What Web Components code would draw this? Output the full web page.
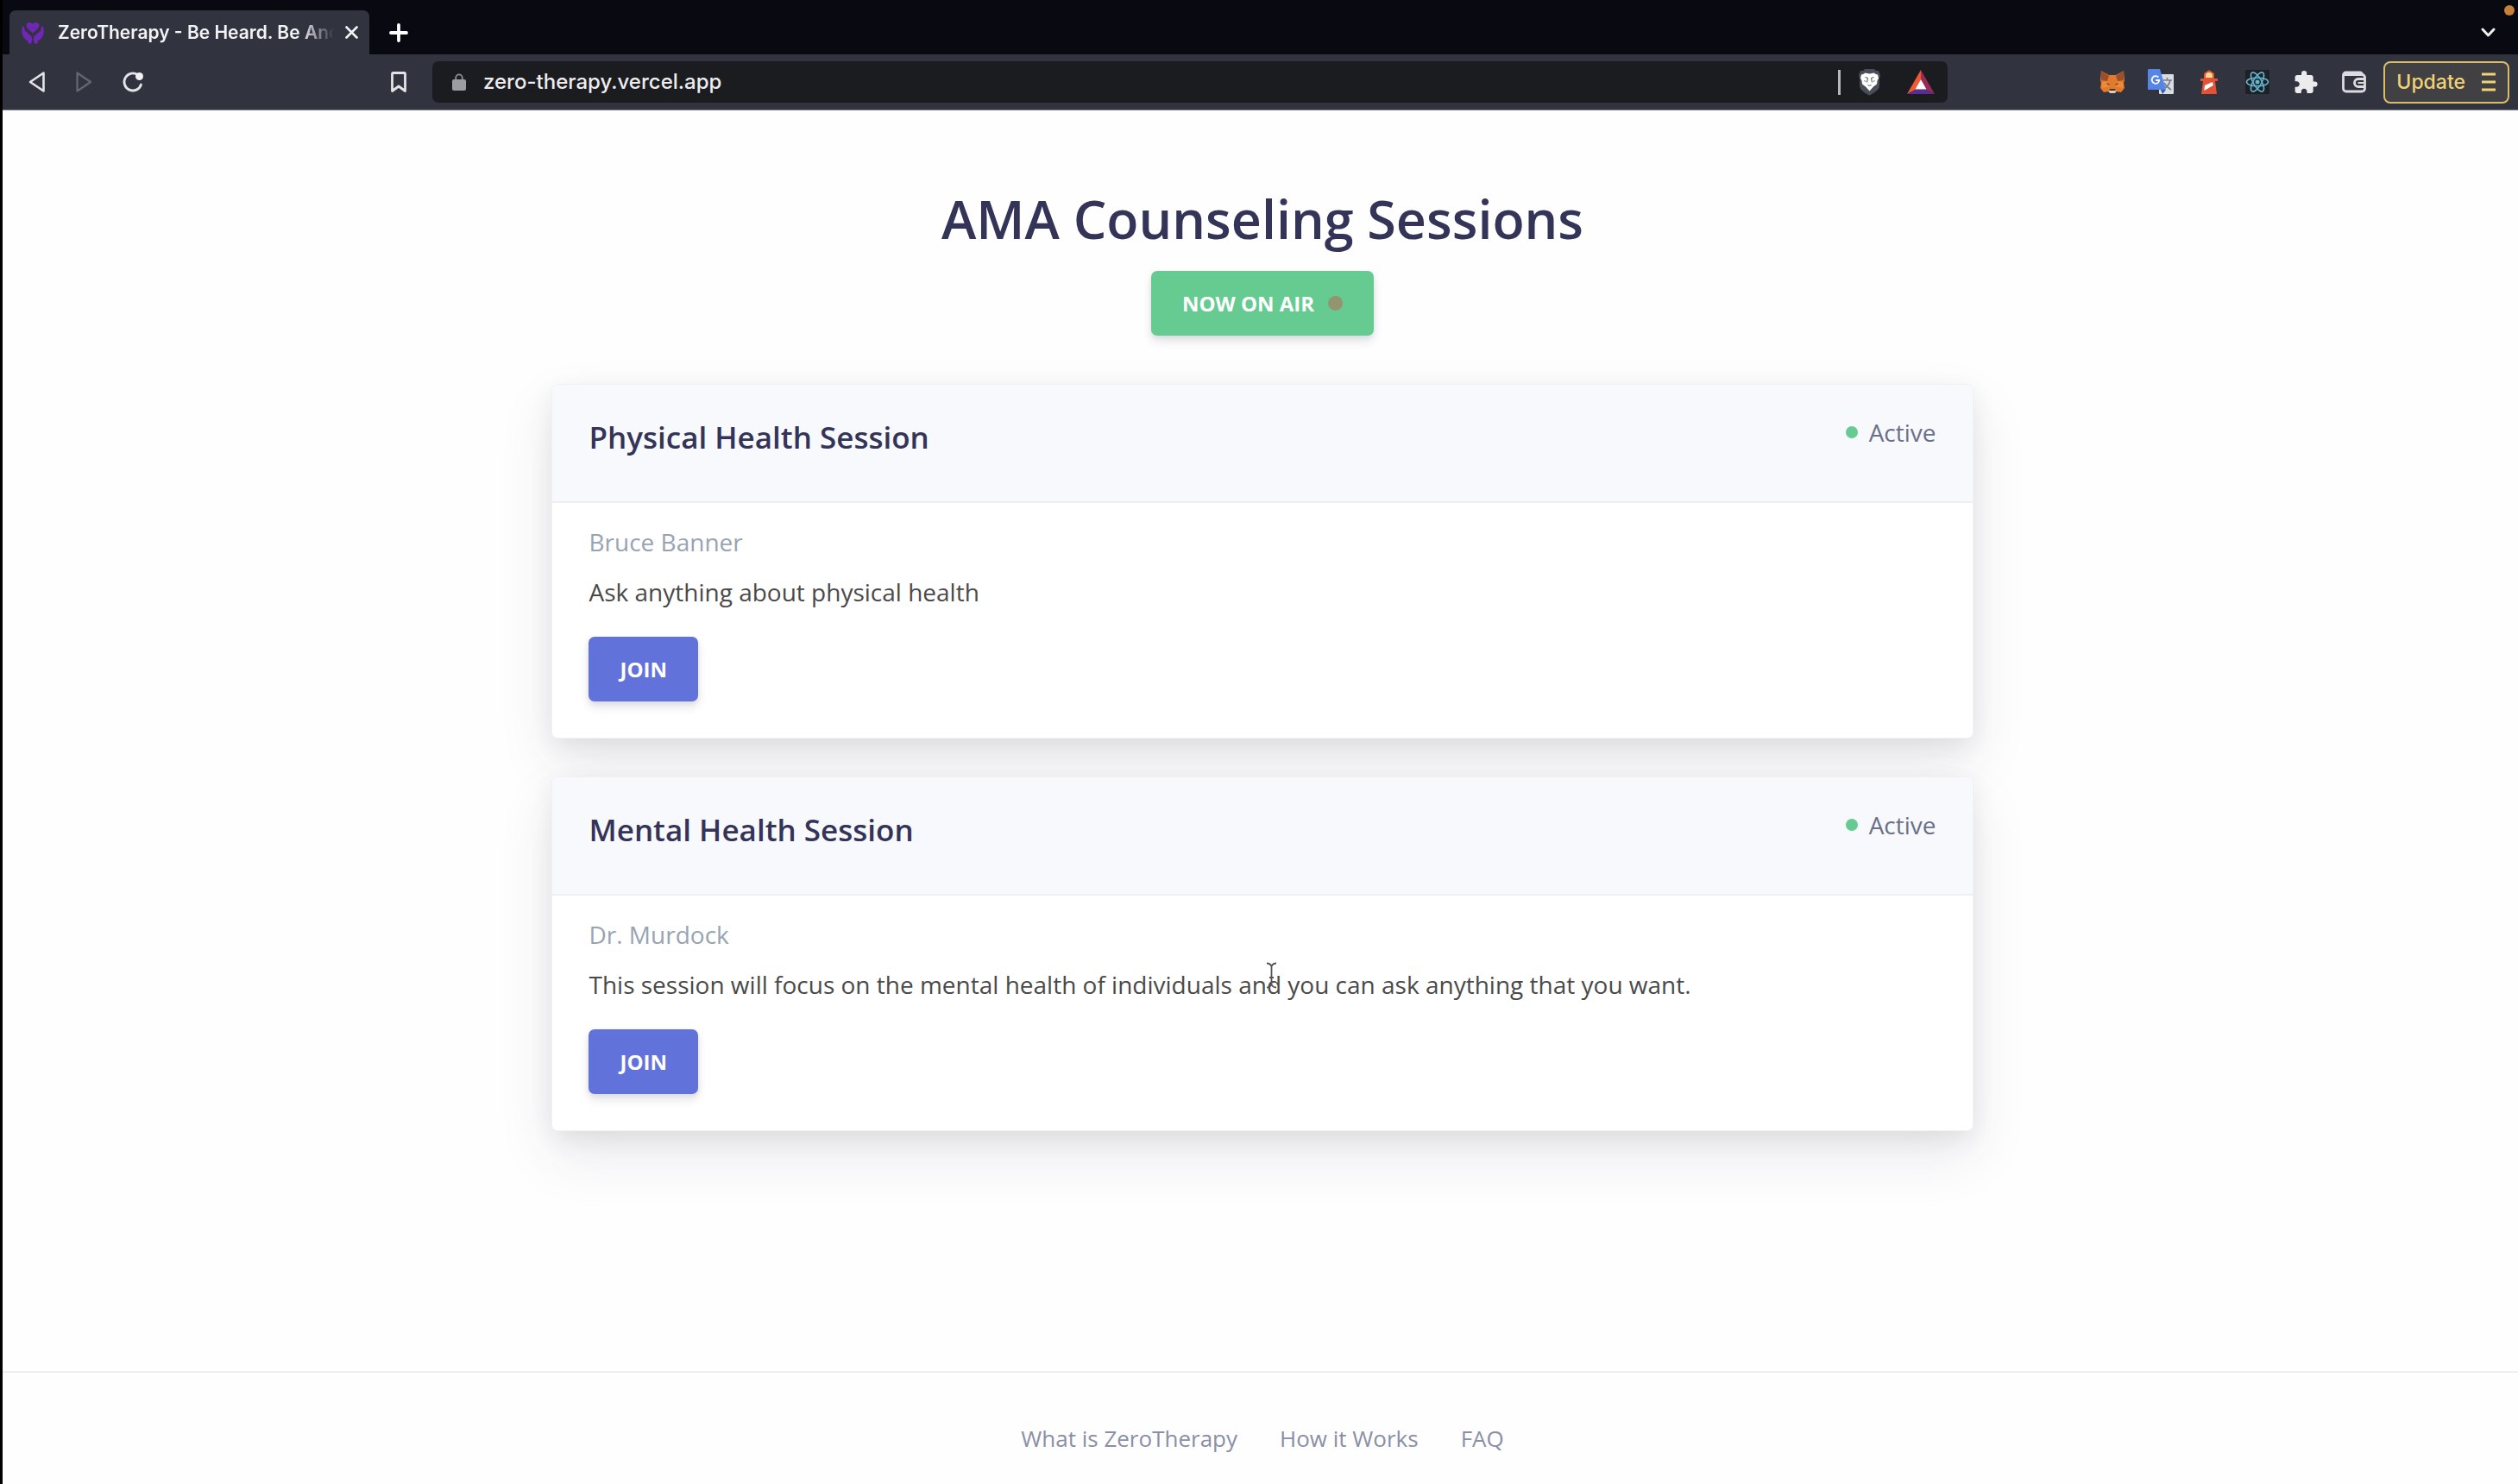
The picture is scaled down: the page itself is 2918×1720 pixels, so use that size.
<!DOCTYPE html>
<html lang="en">
<head>
<meta charset="utf-8">
<title>ZeroTherapy - Be Heard. Be Anonymous</title>
<style>
    body {
        margin: 0;
        border-left: 3px solid #000;
        min-height: 100vh;
        box-sizing: border-box;
        display: flex;
        flex-direction: column;
        background: #fefefe;
        font-family: "Open Sans", sans-serif;
    }
    therapy-page {
        flex: 1;
    }
</style>
</head>
<body>

<browser-bar>
    <browser-tab slot="tab">ZeroTherapy - Be Heard. Be Anonymous</browser-tab>
    <address-bar slot="address" url="zero-therapy.vercel.app"></address-bar>
</browser-bar>

<therapy-page>
    <span slot="title">AMA Counseling Sessions</span>
    <on-air-button slot="action">NOW ON AIR</on-air-button>
    <session-card>
        <span slot="title">Physical Health Session</span>
        <span slot="status">Active</span>
        <span slot="host">Bruce Banner</span>
        <span slot="about">Ask anything about physical health</span>
    </session-card>
    <session-card>
        <span slot="title">Mental Health Session</span>
        <span slot="status">Active</span>
        <span slot="host">Dr. Murdock</span>
        <span slot="about">This session will focus on the mental health of individuals and you can ask anything that you want.</span>
    </session-card>
    <page-footer slot="footer">
        <a href="#what">What is ZeroTherapy</a>
        <a href="#how">How it Works</a>
        <a href="#faq">FAQ</a>
    </page-footer>
</therapy-page>

<script>
class BrowserTab extends HTMLElement {

    constructor() {
        super();
        this.attachShadow({ mode: "open" }).innerHTML = `
        <style>
        :host {
            display: flex;
            align-items: center;
            box-sizing: border-box;
            width: 417px;
            height: 51px;
            padding: 0 13px 0 14px;
            border-radius: 7px 7px 0 0;
            background: #31333f;
            color: #f3f3f5;
            font: 600 21px/28px Inter, sans-serif;
        }
        .favicon {
            flex: none;
            margin-right: 16px;
        }
        .label {
            flex: 1;
            overflow: hidden;
            white-space: nowrap;
            -webkit-mask-image: linear-gradient(to right, #000 88%, transparent);
            mask-image: linear-gradient(to right, #000 88%, transparent);
        }
        button {
            flex: none;
            display: flex;
            margin-left: 13px;
            padding: 0;
            border: 0;
            background: none;
            color: inherit;
        }
        </style>
        <svg class="favicon" width="26" height="26" viewBox="0 0 26 26" fill="#7226b8">
            <path d="M13 13.500L7 8C4.500 5 5.500 1 9 1c1.800 0 3.200.8 4 2 .8-1.200 2.200-2 4-2 3.500 0 4.500 4 2 7z"/>
            <path d="M2 5C3.300 5.800 3 8 4 10.500l7.300 6.500c.7 1.500.9 3 .9 4.500L11 25.500H8l-1-3C3.500 20.500.8 17 .3 12.500 0 9.500.2 6.500 2 5z"/>
            <path d="M24 5c-1.300.8-1 3-2 5.500l-7.300 6.500c-.7 1.500-.9 3-.9 4.500l1.200 4h3l1-3c3.500-2 6.200-5.500 6.700-10 .3-3 .1-6-1.700-7.500z"/>
            <path d="M9 6.500c1.500 1.500 2.500 1 4 .2 1.500.8 2.500 1.300 4-.2" fill="none" stroke="#5a2d90" stroke-width="1"/>
        </svg>
        <span class="label"><slot></slot></span>
        <button aria-label="Close tab">
            <svg width="15" height="15" viewBox="0 0 15 15" fill="none" stroke="currentColor" stroke-width="2.600" stroke-linecap="round"><path d="M1.500 1.500l12 12M13.500 1.500l-12 12"/></svg>
        </button>`;
    }

}

class AddressBar extends HTMLElement {

    connectedCallback() {
        this.attachShadow({ mode: "open" }).innerHTML = `
        <style>
        :host {
            display: flex;
            align-items: center;
            box-sizing: border-box;
            height: 48px;
            padding: 0 15px 0 23px;
            border-radius: 7px;
            background: #1b1c1f;
        }
        svg {
            flex: none;
        }
        input {
            flex: 1;
            min-width: 0;
            margin: 0 0 0 20px;
            padding: 0;
            border: 0;
            outline: 0;
            background: none;
            color: #ededf0;
            font: 500 24px/30px Inter, sans-serif;
        }
        .divider {
            width: 3px;
            height: 29px;
            margin-right: 20px;
            background: #b6b7ba;
        }
        .shield {
            margin-right: 30px;
        }
        </style>
        <svg width="16" height="20" viewBox="0 0 16 20">
            <path d="M4.200 9V5.200a3.800 3.800 0 0 1 7.600 0V9" fill="none" stroke="#8c9094" stroke-width="1.800"/>
            <rect x="0" y="7" width="16" height="13" rx="2" fill="#9a9ea2"/>
        </svg>
        <input type="text" aria-label="Address" value="${this.getAttribute("url")}">
        <span class="divider"></span>
        <svg class="shield" width="27" height="32" viewBox="0 0 27 32">
            <path d="M8 1h11l2 2h3l2 5-1 4 0 8c0 5-5 8-11.500 11.500C7 28 2 25 2 20V12L1 8l2-5h3z" fill="#4b4c59"/>
            <path d="M8.500 5.500 13.500 6.500l5-1 2.500 1.500 2 .5 1 4-1.500 3-.5 4-4 3-4.500 5-4.500-5-4-3-.5-4-1.500-3 1-4 2-.5z" fill="#fff"/>
            <path d="M8.500 10.500l3 1-1 5M18.500 10.500l-3 1 1 5M7.500 14.500l1.500 1M19.500 14.500l-1.500 1M11.500 19.500l2 1 2-1" fill="none" stroke="#4b4c59" stroke-width="1"/>
        </svg>
        <svg width="32" height="28" viewBox="0 0 32 28">
            <path d="M16 0L0 28l10.500-5.500L16 11z" fill="#ef5a35"/>
            <path d="M16 0l16 28-10.500-5.500L16 11z" fill="#9a2a58"/>
            <path d="M0 28h32l-10.500-5.500h-11z" fill="#5a2d91"/>
            <path d="M16 11l6.500 11.500h-13z" fill="#fff"/>
        </svg>`;
    }

}

class BrowserBar extends HTMLElement {

    constructor() {
        super();
        this.attachShadow({ mode: "open" }).innerHTML = `
        <style>
        :host {
            display: block;
            color: #e4e4e8;
        }
        button {
            display: flex;
            align-items: center;
            padding: 0;
            border: 0;
            background: none;
            color: inherit;
            font: inherit;
        }
        .strip {
            position: relative;
            display: flex;
            align-items: flex-end;
            height: 63px;
            padding: 0 26px 0 8px;
            background: #090912;
        }
        .strip button {
            height: 51px;
        }
        .new-tab {
            margin-left: 23px;
        }
        .tab-search {
            margin-left: auto;
        }
        /* camera-in-use light */
        .light {
            position: absolute;
            top: 6px;
            right: 4px;
            width: 12px;
            height: 12px;
            border-radius: 50%;
            background: #c5803a;
        }
        .toolbar {
            display: flex;
            align-items: center;
            height: 65px;
            padding: 0 10px 0 30px;
            border-bottom: 1px solid #85868d;
            background: #31333f;
            box-sizing: border-box;
        }
        .nav {
            display: flex;
            gap: 34px;
        }
        .bookmark {
            margin: 0 29px 0 285px;
        }
        .address {
            flex: 1;
            min-width: 0;
        }
        .extensions {
            display: flex;
            align-items: center;
            gap: 26px;
            margin: 0 19px 0 176px;
        }
        .update {
            gap: 19px;
            height: 49px;
            padding: 0 14px 0 13px;
            border: 2px solid #d9bd68;
            border-radius: 8px;
            background: #414043;
            color: #f0d377;
            font: 500 23px/30px Inter, sans-serif;
        }
        </style>
        <div class="strip">
            <slot name="tab"></slot>
            <button class="new-tab" aria-label="New tab">
                <svg width="22" height="22" viewBox="0 0 22 22" fill="none" stroke="#fff" stroke-width="3.800" stroke-linecap="round"><path d="M11 2v18M2 11h18"/></svg>
            </button>
            <button class="tab-search" aria-label="Search tabs">
                <svg width="17" height="12" viewBox="0 0 17 12" fill="none" stroke="#eee" stroke-width="3" stroke-linecap="round" stroke-linejoin="round"><path d="M2 2l6.500 7L15 2"/></svg>
            </button>
            <span class="light"></span>
        </div>
        <div class="toolbar">
            <div class="nav">
                <button aria-label="Back">
                    <svg width="20" height="26" viewBox="0 0 20 26" fill="none" stroke="currentColor" stroke-width="2.600" stroke-linejoin="round"><path d="M17.500 2.500v21L2 13z"/></svg>
                </button>
                <button aria-label="Forward">
                    <svg width="20" height="26" viewBox="0 0 20 26" fill="none" stroke="#656671" stroke-width="2.300" stroke-linejoin="round"><path d="M2.500 2.500v21L18 13z"/></svg>
                </button>
                <button aria-label="Reload">
                    <svg width="26" height="26" viewBox="0 0 26 26"><path d="M19 5A10 10 0 1 0 22.500 16" fill="none" stroke="currentColor" stroke-width="2.800" stroke-linecap="round"/><circle cx="20.500" cy="6.500" r="4.500" fill="#f1f1f4"/></svg>
                </button>
            </div>
            <button class="bookmark" aria-label="Bookmark">
                <svg width="20" height="26" viewBox="0 0 20 26" fill="none" stroke="currentColor" stroke-width="2.800" stroke-linejoin="round"><path d="M3.500 2.500h13a1 1 0 0 1 1 1v20L10 18l-7.500 5.500v-20a1 1 0 0 1 1-1z"/></svg>
            </button>
            <div class="address"><slot name="address"></slot></div>
            <div class="extensions">
                <button aria-label="MetaMask">
                    <svg width="30" height="28" viewBox="0 0 30 28">
                        <path d="M2 1l9 5h8l9-5 1 11-1 3 1 6-4 5-6-1-2 2h-4l-2-2-6 1-4-5 1-6-1-3z" fill="#e17a2d"/>
                        <path d="M2 1l9 6-2 6-7-1zM28 1l-9 6 2 6 7-1z" fill="#9b4f2a"/>
                        <path d="M2 15l7-2 3 6-9 2zM28 15l-7-2-3 6 9 2z" fill="#ef8a37"/>
                        <path d="M8 15l3 1 1 2-3-1zM22 15l-3 1-1 2 3-1z" fill="#6b4a36"/>
                        <path d="M10 24l2-1h6l2 1-2 3h-6z" fill="#dccabb"/>
                        <path d="M12 22h6l1 2h-8z" fill="#46372f"/>
                    </svg>
                </button>
                <button aria-label="Translate">
                    <svg width="30" height="30" viewBox="0 0 30 30">
                        <rect x="13" y="6" width="17" height="23" rx="1" fill="#d9dce0"/>
                        <path d="M17 13h11M22.500 10v3M26 13c-1 5-4 8-8 10M19 16c2 4 5 6 8 8" fill="none" stroke="#75808c" stroke-width="1.700"/>
                        <path d="M15 24h6l-4 5z" fill="#3259b4"/>
                        <path d="M1 0h13l7 24H1a1 1 0 0 1-1-1V1a1 1 0 0 1 1-1z" fill="#5685e8"/>
                        <path d="M12.300 9.700a4.300 4.300 0 1 0 1 3.300H9.300" fill="none" stroke="#fff" stroke-width="1.800"/>
                    </svg>
                </button>
                <button aria-label="Lighthouse">
                    <svg width="30" height="28" viewBox="0 0 30 28">
                        <path d="M15 0l6 4v6h4v3h-3l2 15H6l2-15H5v-3h4V4z" fill="#e05334"/>
                        <path d="M11 9V7a4 4 0 0 1 8 0v2z" fill="#f9dc91"/>
                        <path d="M10 18l9-4 .8 4-10.500 6z" fill="#fff"/>
                    </svg>
                </button>
                <button aria-label="React Developer Tools">
                    <svg width="30" height="28" viewBox="0 0 30 28">
                        <rect x="1" width="28" height="28" rx="1" fill="#1d2125"/>
                        <g fill="none" stroke="#65b5d0" stroke-width="1.600">
                            <ellipse cx="15" cy="14" rx="12.500" ry="4.800"/>
                            <ellipse cx="15" cy="14" rx="12.500" ry="4.800" transform="rotate(60 15 14)"/>
                            <ellipse cx="15" cy="14" rx="12.500" ry="4.800" transform="rotate(120 15 14)"/>
                        </g>
                        <circle cx="15" cy="14" r="2.500" fill="#65b5d0"/>
                    </svg>
                </button>
                <button aria-label="Extensions">
                    <svg width="30" height="26" viewBox="1 1 22 21" fill="#ececef"><path d="M20.500 11H19V7c0-1.100-.9-2-2-2h-4V3.500a2.500 2.500 0 0 0-5 0V5H4c-1.100 0-2 .9-2 2v3.800h1.500c1.500 0 2.700 1.200 2.700 2.700S5 16.200 3.500 16.200H2V20c0 1.100.9 2 2 2h3.800v-1.500c0-1.500 1.200-2.700 2.700-2.700s2.700 1.200 2.700 2.700V22H17c1.100 0 2-.9 2-2v-4h1.500a2.500 2.500 0 0 0 0-5z"/></svg>
                </button>
                <button aria-label="Wallet">
                    <svg width="30" height="26" viewBox="0 0 30 26" fill="none" stroke="#dcdce0" stroke-width="2.800">
                        <path d="M3 4.500h21.500a3 3 0 0 1 3 3v13a3.500 3.500 0 0 1-3.500 3.500H6a3.500 3.500 0 0 1-3.500-3.500V5A3 3 0 0 1 5.500 2h16a3 3 0 0 1 3 2.500"/>
                        <path d="M28 9.500h-8a4.500 4.500 0 0 0 0 9h8"/><path d="M19.500 14H26" stroke-width="2"/>
                    </svg>
                </button>
            </div>
            <button class="update">Update
                <svg width="16" height="24" viewBox="0 0 16 24" stroke="currentColor" stroke-width="3"><path d="M0 3h16M0 12h16M0 21h16"/></svg>
            </button>
        </div>`;
    }

}

class OnAirButton extends HTMLElement {

    constructor() {
        super();
        this.attachShadow({ mode: "open" }).innerHTML = `
        <style>
        :host {
            display: inline-block;
        }
        button {
            display: flex;
            align-items: center;
            gap: 16px;
            height: 75px;
            padding: 0 36px;
            border: 0;
            border-radius: 7px;
            background: #66cb90;
            box-shadow: 0 7px 11px rgba(50, 50, 93, .11), 0 2px 6px rgba(0, 0, 0, .08);
            color: #fff;
            font: 700 24px/38px "Open Sans", sans-serif;
        }
        .dot {
            width: 17px;
            height: 17px;
            border-radius: 50%;
            background: #929570;
        }
        </style>
        <button><slot></slot><span class="dot"></span></button>`;
    }

}

class SessionCard extends HTMLElement {

    constructor() {
        super();
        this.attachShadow({ mode: "open" }).innerHTML = `
        <style>
        :host {
            display: block;
            overflow: hidden;
            border: 1px solid #f1f1f4;
            border-radius: 7px;
            background: #fff;
            box-shadow: 0 28px 65px rgba(50, 50, 93, .1), 0 9px 28px rgba(0, 0, 0, .07);
            font-size: 28px;
            line-height: 42px;
        }
        header {
            display: flex;
            justify-content: space-between;
            align-items: flex-start;
            padding: 34px 42px 51px;
            border-bottom: 2px solid #eeeff4;
            background: #f8f9fd;
        }
        h2 {
            margin: 0;
            padding-top: 4px;
            color: #343459;
            font-size: 35px;
            font-weight: 600;
            line-height: 46px;
        }
        .status {
            display: flex;
            align-items: center;
            gap: 13px;
            color: #6b7089;
        }
        .status::before {
            content: "";
            width: 14px;
            height: 14px;
            border-radius: 50%;
            background: #66cb90;
        }
        .body {
            padding: 24px 42px 42px;
        }
        p {
            margin: 0 0 16px;
            color: #4a4a4a;
        }
        .host {
            color: #98a3b3;
        }
        button {
            display: block;
            height: 75px;
            margin-top: 31px;
            padding: 0 36px;
            border: 0;
            border-radius: 7px;
            background: #6172db;
            box-shadow: 0 7px 11px rgba(50, 50, 93, .11), 0 2px 6px rgba(0, 0, 0, .08);
            color: #fff;
            font: 700 24px/38px "Open Sans", sans-serif;
        }
        </style>
        <header>
            <h2><slot name="title"></slot></h2>
            <span class="status"><slot name="status"></slot></span>
        </header>
        <div class="body">
            <p class="host"><slot name="host"></slot></p>
            <p><slot name="about"></slot></p>
            <button>JOIN</button>
        </div>`;
    }

}

class PageFooter extends HTMLElement {

    constructor() {
        super();
        this.attachShadow({ mode: "open" }).innerHTML = `
        <style>
        :host {
            display: flex;
            justify-content: center;
            gap: 49px;
            padding: 56px 0 33px 5px;
            border-top: 2px solid #efefef;
            font-size: 26px;
            line-height: 40px;
        }
        ::slotted(a) {
            color: #8a8fa6;
            text-decoration: none;
        }
        </style>
        <slot></slot>`;
    }

}

class TherapyPage extends HTMLElement {

    constructor() {
        super();
        this.attachShadow({ mode: "open" }).innerHTML = `
        <style>
        :host {
            position: relative;
            display: flex;
            flex-direction: column;
        }
        main {
            flex: 1;
            display: flex;
            flex-direction: column;
            align-items: center;
            padding: 84px 0 0 5px;
        }
        h1 {
            margin: 0 0 18px;
            color: #343459;
            font-size: 61px;
            font-weight: 600;
            line-height: 84px;
        }
        .sessions {
            display: grid;
            gap: 44px;
            width: 56.6%;
            margin-top: 56px;
        }
        .caret {
            position: absolute;
            left: 1464px;
            top: 987px;
        }
        </style>
        <main>
            <h1><slot name="title"></slot></h1>
            <slot name="action"></slot>
            <div class="sessions"><slot></slot></div>
        </main>
        <slot name="footer"></slot>
        <svg class="caret" width="13" height="31" viewBox="0 0 13 31" fill="none" stroke="#555" stroke-width="1.800"><path d="M1 1.500q4 0 5.500 3.500Q8 1.500 12 1.500M6.500 5v21M1 29.500q4 0 5.500-3.500Q8 29.500 12 29.500M4 18h5"/></svg>`;
    }

}

customElements.define("browser-tab", BrowserTab);
customElements.define("address-bar", AddressBar);
customElements.define("browser-bar", BrowserBar);
customElements.define("on-air-button", OnAirButton);
customElements.define("session-card", SessionCard);
customElements.define("page-footer", PageFooter);
customElements.define("therapy-page", TherapyPage);
</script>
</body>
</html>
